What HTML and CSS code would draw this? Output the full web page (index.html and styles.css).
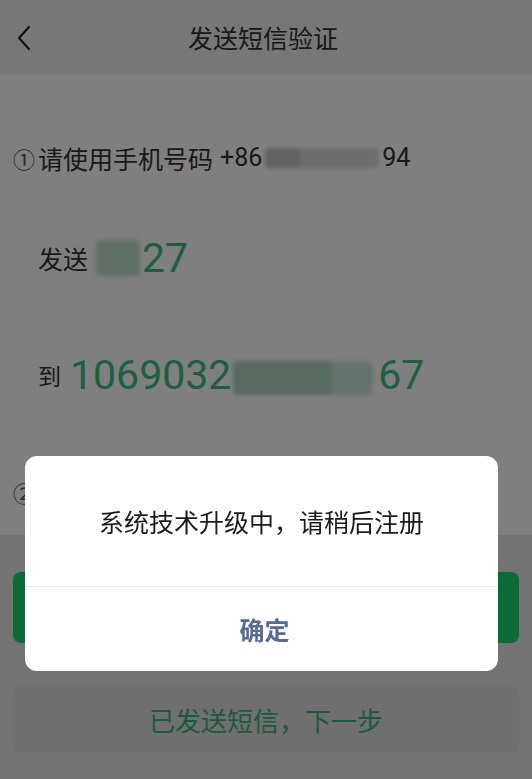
FILE: index.html
```html
<!DOCTYPE html>
<html lang="zh-CN">
<head>
<meta charset="utf-8">
<title>发送短信验证</title>
<link rel="stylesheet" href="styles.css">
</head>
<body>
<div class="page">
  <header class="nav">
    <svg class="back" width="16" height="26" viewBox="0 0 16 26"><path d="M13 2 L3 13 L13 24" fill="none" stroke="#222" stroke-width="2.2" stroke-linecap="round" stroke-linejoin="round"/></svg>
    <div class="title">发送短信验证</div>
  </header>
  <main class="content">
    <div class="step step1"><span class="circ">①</span><span>请使用手机号码</span><span class="num num-first">+86</span><span class="blur blur-a"></span><span class="num">94</span></div>
    <div class="row row-send"><span class="label">发送</span><span class="blur blur-b"></span><span class="big">27</span></div>
    <div class="row row-to"><span class="label">到</span><span class="big">1069032</span><span class="blur blur-c"></span><span class="big">67</span></div>
    <div class="step step2"><span class="circ">②</span></div>
  </main>
  <footer class="foot">
    <div class="btn btn-primary"></div>
    <div class="btn btn-secondary">已发送短信，下一步</div>
  </footer>
</div>
<div class="mask"></div>
<div class="dialog">
  <div class="msg">系统技术升级中，请稍后注册</div>
  <div class="ok">确定</div>
</div>
</body>
</html>
```
FILE: styles.css
```css
html, body { margin: 0; padding: 0; }
body {
  width: 532px;
  height: 779px;
  overflow: hidden;
  font-family: "Noto Sans CJK SC", "Noto Sans", sans-serif;
  color: #333;
  background: #fff;
}
.page { display: flex; flex-direction: column; height: 779px; }
.nav {
  height: 74px;
  flex: none;
  background: #eeeeee;
  display: flex;
  align-items: center;
  justify-content: center;
  position: relative;
}
.back { position: absolute; left: 16px; top: 25px; }
.title { font-size: 25px; color: #333; margin-left: -6px; }
.content {
  flex: 1;
  background: #fff;
  padding: 67px 0 0 13px;
}
.step { font-size: 25px; line-height: 34px; color: #333; display: flex; align-items: center; white-space: nowrap; }
.circ { font-size: 22px; width: 25px; color: #555; }
.num { font-family: "Roboto", "Noto Sans", sans-serif; font-size: 25px; }
.num-first { margin-left: 7px; }
.blur { display: inline-block; filter: blur(2px); border-radius: 4px; }
.blur-a { width: 114px; height: 20px; margin: 0 3px; background: linear-gradient(90deg, #c4c4c4 0 30%, #dadada 30% 100%); }
.row { display: flex; align-items: center; padding-left: 25px; white-space: nowrap; }
.row-send { margin-top: 58px; height: 50px; }
.row-to { margin-top: 67px; height: 50px; }
.label { font-size: 25px; color: #333; }
.big { font-family: "Roboto", "Noto Sans", sans-serif; font-size: 41px; color: #38c07a; line-height: 50px; }
.blur-b { width: 44px; height: 36px; margin: 0 2px 0 8px; background: #bfe0cf; }
.row-to .label { font-size: 23px; margin-right: 9px; }
.blur-c { width: 140px; height: 34px; margin: 6px 2px 0; background: linear-gradient(90deg, #b0d6c3 0 70%, #cde7da 70% 100%); }
.row-to .big:last-child { margin-left: 3px; }
.step2 { margin-top: 75px; }
.foot {
  height: 244px;
  flex: none;
  background: #e6e6e6;
  padding: 37px 13px 0;
  box-sizing: border-box;
  display: flex;
  flex-direction: column;
  gap: 42px;
}
.btn {
  border-radius: 8px;
  display: flex;
  align-items: center;
  justify-content: center;
  font-size: 26px;
}
.btn-primary { height: 71px; background: #14d66c; color: #fff; }
.btn-secondary { height: 68px; background: #dedede; color: #34b874; }
.mask { position: fixed; inset: 0; background: rgba(0, 0, 0, 0.5); }
.dialog {
  position: fixed;
  left: 25px;
  top: 456px;
  width: 473px;
  height: 215px;
  background: #fff;
  border-radius: 12px;
  display: flex;
  flex-direction: column;
  overflow: hidden;
}
.msg {
  height: 131px;
  display: flex;
  align-items: center;
  justify-content: center;
  font-size: 25px;
  color: #1a1a1a;
  border-bottom: 1px solid #e8e8e8;
  box-sizing: border-box;
}
.ok {
  flex: 1;
  display: flex;
  align-items: center;
  justify-content: center;
  font-size: 25px;
  font-weight: 600;
  color: #576b95;
  padding-left: 6px;
}
```
